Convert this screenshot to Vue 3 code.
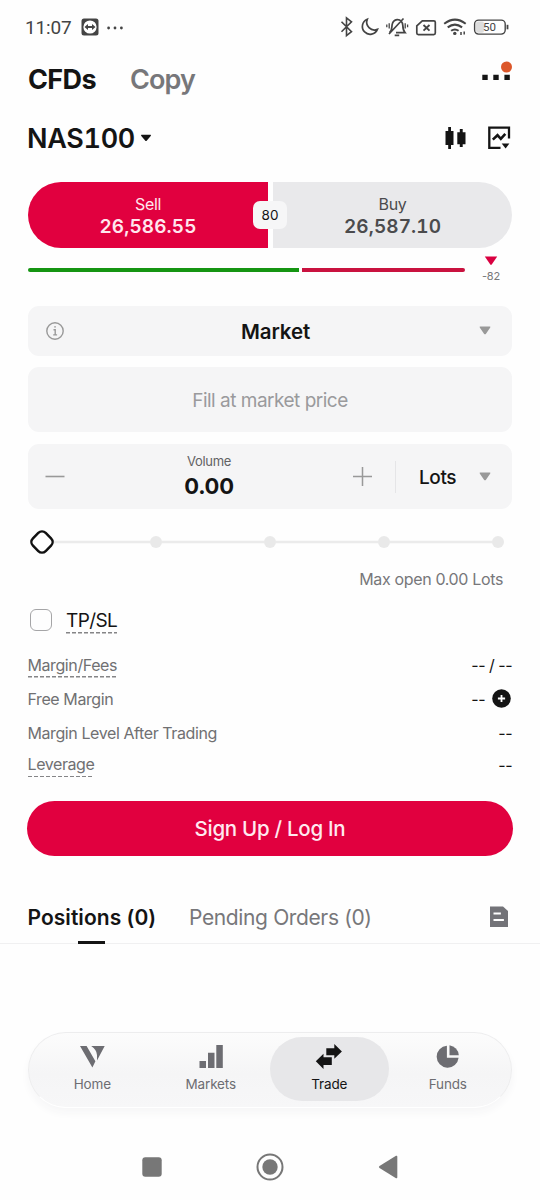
<script setup>
const stops = [0, 1, 2, 3, 4]
</script>

<template>
  <main class="screen">
    <header class="status">
      <span class="clock">11:07</span>
      <svg class="viewer" width="18" height="18" viewBox="0 0 18 18">
        <rect x=".5" y=".5" width="17" height="17" rx="2.5" fill="#444" />
        <circle cx="9" cy="9" r="6.600" fill="#fff" />
        <path d="M3.500 9 7 5.900v2.200h4V5.900L14.500 9 11 12.100V9.900H7v2.200z" fill="#444" />
      </svg>
      <svg class="more-notes" width="18" height="4" viewBox="0 0 18 4" fill="#444">
        <circle cx="2.600" cy="2" r="1.400" /><circle cx="9" cy="2" r="1.400" /><circle cx="15.400" cy="2" r="1.400" />
      </svg>
      <svg class="indicators" width="174" height="24" viewBox="338 16 174 24" fill="none" stroke="#444" stroke-width="1.700">
        <path d="m341.500 21.700 10 10-5 4V17.800l5 4-10 10" stroke-width="1.600" />
        <path d="M367.300 19.200a7.800 7.800 0 1 0 10.100 10.200c-6.500 2.500-12.500-3.800-10.100-10.200z" />
        <path d="M389.500 32.600c2.700-2 2.100-5.300 2.700-8.300.5-2.400 2.300-4.200 4.900-4.600 3.700-.2 5.600 2.700 5.700 5.700.1 3.200.4 5.200 2.200 7.200h-9M394.700 35.300h4.500M403.500 18.500l-14.500 15.500" />
        <path d="M389.200 23.200v5.200M386.800 24.500v2.700M405.200 23.200v5.200M407.600 24.500v2.700" stroke-width="1.300" />
        <path d="M422.300 20.800h11.500q1.500 0 1.500 1.500v10.800q0 1.500-1.500 1.500h-15.500q-1.500 0-1.500-1.500v-7.300z" />
        <path d="m423.500 25 6 5.600m0-5.600-6 5.600" stroke-width="1.900" />
        <path d="M444.200 23.700q10.800-8.200 21.500 0M447.700 27.400q7.200-5.600 14.400 0M451.100 30.800q3.800-2.800 7.500 0" stroke-width="2" />
        <circle cx="454.800" cy="33.400" r="1.700" fill="#444" stroke="none" />
        <path d="M461 35v-3M464.200 31.500v3" stroke-width="1.500" />
        <rect x="476" y="21.400" width="8" height="11.400" rx="2" fill="#ddd" stroke="none" />
        <rect x="474.600" y="20.100" width="30.600" height="14" rx="4" stroke-width="1.400" />
        <path d="M507.500 24.800v4.500" stroke-width="1.800" />
        <text x="483" y="31.300" class="charge">50</text>
      </svg>
    </header>

    <nav class="modes">
      <b class="cfds">CFDs</b><span class="copy">Copy</span>
      <svg class="menu" width="32" height="24" viewBox="0 0 32 24">
        <path d="M2.300 14.700h5.400v5.400H2.300zM13.300 14.700h5.400v5.400h-5.400zM24.400 14.700h5.400v5.400h-5.400z" fill="#141414" />
        <circle cx="26.500" cy="7" r="5.500" fill="#dc572a" />
      </svg>
    </nav>

    <section class="symbol">
      <span class="ticker">NAS100</span>
      <svg class="drop" width="12" height="8" viewBox="0 0 12 8"><path d="M1.700.8h8.600q1.300 0 .4 1.200l-4 4.700q-.7.700-1.400 0l-4-4.700Q.4.800 1.700.8z" fill="#141414" /></svg>
      <svg class="candles" width="24" height="24" viewBox="0 0 24 24" fill="#141414">
        <path d="M1.500 5h2.700V1h2.800v4h2.500v14H7v4H4.200v-4H1.500zM13.300 6.300h2.500V3h2.900v3.300h2.800v12h-2.800v2.800h-2.900v-2.800h-2.500z" />
      </svg>
      <svg class="chart" width="24" height="24" viewBox="0 0 24 24" fill="none" stroke="#141414" stroke-width="2.300">
        <path d="M22 12.500V1.700H2.300v20.200h11.200" /><path d="m5.800 13.600 4.700-4.400 3.300 3.600 4.500-5" stroke-width="2.600" /><path d="M14.700 17.500h7.700l-3.800 4.900z" fill="#141414" stroke="none" />
      </svg>
    </section>

    <section class="quotes">
      <div class="quote sell"><span>Sell</span><strong>26,586.55</strong></div>
      <div class="quote buy"><span>Buy</span><strong>26,587.10</strong></div>
      <span class="spread">80</span>
    </section>

    <section class="sentiment">
      <i class="green"></i><i class="red"></i>
      <div class="delta">
        <svg width="14" height="10" viewBox="0 0 14 10"><path d="M.8.500h12.400L7.700 8.500q-.7.900-1.400 0z" fill="#d90040" /></svg>
        <span>-82</span>
      </div>
    </section>

    <section class="field order">
      <svg class="info" width="20" height="20" viewBox="0 0 20 20" fill="none" stroke="#999" stroke-width="1.400"><circle cx="10" cy="10" r="8.200" /><path d="M8.500 8.700h1.700v5.100M8.200 13.900h3.900M9.200 5.900h1.700" /></svg>
      <b class="market">Market</b>
      <svg class="caret" width="12" height="9" viewBox="0 0 12 9"><path d="M1.300.500h9.400q1.300 0 .4 1.200L7 7.700q-1 1-2 0l-4.100-6Q0 .500 1.300.500z" fill="#999" /></svg>
    </section>

    <section class="field fill"><span>Fill at market price</span></section>

    <section class="field volume">
      <svg class="minus" width="20" height="20" viewBox="0 0 20 20"><path d="M.500 9.500h19" stroke="#999" stroke-width="1.600" /></svg>
      <div class="amount"><span>Volume</span><b>0.00</b></div>
      <svg class="plus" width="20" height="20" viewBox="0 0 20 20"><path d="M0 9.500h19M9.500 0v19" stroke="#999" stroke-width="1.500" /></svg>
      <i class="divider"></i>
      <span class="lots">Lots</span>
      <svg class="caret" width="12" height="9" viewBox="0 0 12 9"><path d="M1.300.500h9.400q1.300 0 .4 1.200L7 7.700q-1 1-2 0l-4.100-6Q0 .500 1.300.500z" fill="#999" /></svg>
    </section>

    <section class="slider">
      <svg width="485" height="28" viewBox="0 0 485 28">
        <path d="M14 14h457" stroke="#ebebeb" stroke-width="2.400" />
        <circle v-for="s in stops" :key="s" :cx="14 + s * 114" cy="14" r="6" fill="#e9e9e9" />
        <rect x="5" y="5" width="18" height="18" rx="5.200" transform="rotate(45 14 14)" fill="#fff" stroke="#111" stroke-width="2.500" />
      </svg>
    </section>
    <div class="max"><span>Max open 0.00 Lots</span></div>

    <div class="stoploss"><i class="check"></i><span class="tpsl">TP/SL</span></div>

    <section class="stats">
      <div class="stat"><span class="dashed fees">Margin/Fees</span><span class="value">-- / --</span></div>
      <div class="stat"><span class="free">Free Margin</span><span class="value">--</span>
        <svg class="add" width="20" height="20" viewBox="0 0 20 20"><circle cx="9.500" cy="9.500" r="9.300" fill="#141414" /><path d="M5.900 9.500h7.200M9.500 5.900v7.200" stroke="#fff" stroke-width="1.800" /></svg>
      </div>
      <div class="stat"><span class="level">Margin Level After Trading</span><span class="value">--</span></div>
      <div class="stat short"><span class="dashed lev">Leverage</span><span class="value">--</span></div>
    </section>

    <button class="login"><span>Sign Up / Log In</span></button>

    <nav class="tabs">
      <b class="positions">Positions (0)</b><span class="pending">Pending Orders (0)</span>
      <svg class="history" width="20" height="22" viewBox="0 0 20 22"><path d="M0 .500h13L18 5v16H0z" fill="#737378" /><path d="M3.500 7.500h7.400M3.500 14h10.400" stroke="#fff" stroke-width="2.200" /></svg>
    </nav>

    <nav class="dock">
      <div class="item">
        <svg width="28" height="26" viewBox="0 0 28 26" fill="#6d6d72"><path d="M2 2h6.600l8.800 15.200-3 6.200zM13.200 2h13.500L19 16.600V10.900q-.2-5-5.800-8.900z" /></svg>
        <span>Home</span>
      </div>
      <div class="item">
        <svg width="28" height="26" viewBox="0 0 28 26" fill="#6d6d72"><path d="M2.500 17h6.500v7H2.500zM11 8.700h6.500V24H11zM19.300 1h6.500v23h-6.500z" /></svg>
        <span>Markets</span>
      </div>
      <div class="item active">
        <svg width="28" height="26" viewBox="0 0 28 26" fill="#141414"><path d="M11.300 4.300h8V0l7.600 7.600-7.600 7.200v-3.600h-8z" /><path d="M16.800 13.300H8.500V9.700L.8 17.300l7.700 7.600v-4h8.300z" /></svg>
        <span>Trade</span>
      </div>
      <div class="item">
        <svg width="28" height="26" viewBox="0 0 28 26" fill="#6d6d72"><path d="M12.900 1.700a11 11 0 1 0 11.700 12.100H12.900z" /><path d="M15.500 1.200a11 11 0 0 1 9.300 10H15.500z" /></svg>
        <span>Funds</span>
      </div>
    </nav>

    <footer class="system">
      <svg width="20" height="20" viewBox="0 0 20 20"><rect x=".3" y=".3" width="19.400" height="19.400" rx="3" fill="#777" /></svg>
      <svg width="28" height="28" viewBox="0 0 28 28"><circle cx="14" cy="14" r="12.500" fill="none" stroke="#777" stroke-width="2" /><circle cx="14" cy="14" r="7.700" fill="#777" /></svg>
      <svg width="20" height="24" viewBox="0 0 20 24"><path d="M18 .800q1.300-.6 1.300 1v20.400q0 1.600-1.300 1L1.500 13q-1.300-1 0-2z" fill="#777" /></svg>
    </footer>
  </main>
</template>

<style>
body { margin: 0; background: #fefefe; }
</style>

<style scoped>
* { box-sizing: border-box; }
.screen { width: 540px; height: 1200px; background: #fefefe; font-family: Inter, "Liberation Sans", sans-serif; color: #141414; display: flex; flex-direction: column; overflow: hidden; }
svg { display: block; flex: none; }
span, b, strong { white-space: nowrap; }
.status { height: 56px; display: flex; align-items: center; padding: 0 28px 0 25px; }
.clock { font: 19px/24px Roboto, sans-serif; color: #444; width: 56px; letter-spacing: -.15px; }
.viewer { margin-top: -2px; }
.more-notes { margin: -1px 0 0 7px; }
.indicators { margin-left: auto; }
.charge { font: 11.500px Roboto, sans-serif; fill: #444; stroke: none; }
.modes { height: 46px; display: flex; align-items: center; padding: 0 28px; }
.cfds { font-size: 27px; font-weight: 700; width: 102px; letter-spacing: -.6px; }
.copy { font-size: 27px; font-weight: 600; color: #77777a; letter-spacing: -.9px; }
.menu { margin: -15px 0 0 auto; }
.symbol { height: 72px; display: flex; align-items: center; padding: 0 29px 0 27px; }
.ticker { font-size: 27px; font-weight: 600; width: 113px; margin-top: 1px; font-feature-settings: "tnum"; letter-spacing: -.3px; }
.drop { margin-top: -1px; }
.candles { margin-left: auto; }
.chart { margin-left: 19px; margin-top: -1px; }
.quotes { height: 66px; margin: 8px 28px 0; display: flex; gap: 5px; position: relative; }
.quote { display: flex; flex-direction: column; align-items: center; padding-top: 11px; }
.quote span { font-size: 16px; line-height: 22px; letter-spacing: -.35px; }
.quote strong { font-size: 19px; line-height: 23px; font-weight: 600; font-feature-settings: "tnum"; letter-spacing: .1px; }
.sell { width: 240px; background: #e1003f; color: #ffe6ee; border-radius: 33px 0 0 33px; }
.buy { flex: 1; background: #e9e9eb; color: #4b4b4d; border-radius: 0 33px 33px 0; }
.spread { position: absolute; left: 225px; top: 19px; width: 34px; height: 28px; border-radius: 7px; background: #f6f6f7; text-align: center; font-size: 13.500px; line-height: 28px; }
.sentiment { height: 38px; margin: 7px 28px 0; display: flex; align-items: flex-start; }
.green, .red { height: 4px; margin-top: 13px; border-radius: 2px 0 0 2px; background: #159512; width: 271px; }
.red { width: 163px; margin-left: 3px; border-radius: 0 2px 2px 0; background: #c9123f; }
.delta { margin: 1px 0 0 auto; width: 42px; display: flex; flex-direction: column; align-items: center; font-size: 11px; line-height: 12px; color: #77777a; gap: 4px; letter-spacing: -.2px; }
.field { margin: 0 28px; background: #f5f5f6; border-radius: 11px; display: flex; align-items: center; }
.order { height: 50px; margin-top: 13px; padding: 0 21px 0 17px; }
.order .caret { margin-top: -1px; }
.market { flex: 1; text-align: center; font-size: 20.500px; font-weight: 600; padding-left: 7px; letter-spacing: -.1px; }
.fill { height: 65px; margin-top: 11px; padding-top: 2px; justify-content: center; font-size: 19px; color: #9a9a9c; letter-spacing: -.5px; }
.volume { height: 65px; margin-top: 12px; padding: 0 21px 0 17px; }
.amount { width: 288px; display: flex; flex-direction: column; align-items: center; margin-top: -1px; }
.amount span { font-size: 13px; line-height: 20px; color: #626264; letter-spacing: -.3px; }
.amount b { font-size: 22px; line-height: 31px; font-weight: 700; letter-spacing: -.3px; }
.divider { width: 1px; height: 32px; background: #e5e5e7; margin-left: 22px; }
.lots { font-size: 19px; font-weight: 500; margin-left: 23px; margin-top: 2px; letter-spacing: -.4px; }
.volume .caret { margin-left: auto; }
.slider { height: 28px; margin: 19px 28px 0; }
.max { height: 26px; margin-top: 10px; padding-right: 37px; text-align: right; font-size: 16px; line-height: 26px; color: #77777a; letter-spacing: -.35px; }
.stoploss { height: 28px; margin-top: 14px; padding-left: 30px; display: flex; align-items: center; }
.check { width: 22px; height: 22px; border: 1.500px solid #a5a5a7; border-radius: 6px; }
.tpsl { font-size: 19px; line-height: 28px; height: 27px; margin-left: 14px; letter-spacing: -.6px; }
.tpsl, .dashed { background: repeating-linear-gradient(90deg, #858587 0 4px, transparent 4px 6px) 0 100% / 100% 1.500px no-repeat; }
.stats { height: 135px; margin: 14px 28px 0 27.500px; font-size: 16px; color: #707072; letter-spacing: -.41px; }
.stat { height: 34px; display: flex; align-items: center; }
.short { height: 29px; }
.dashed { line-height: 25px; height: 25px; }
.value { margin-left: auto; color: #141414; letter-spacing: -.5px; }
.add { margin-left: 7px; }
.login { height: 55px; margin: 18px 27px 0; border: 0; border-radius: 28px; background: #e1003f; color: #ffe9f0; font: 500 20.500px Inter, sans-serif; letter-spacing: -.28px; }
.tabs { height: 54px; margin-top: 34px; padding: 2px 30px 0 27.500px; display: flex; align-items: center; border-bottom: 1px solid #f0f0f1; position: relative; font-size: 21px; }
.tabs::after { content: ""; position: absolute; left: 78px; bottom: -1px; width: 27px; height: 3px; background: #141414; }
.positions { font-weight: 600; width: 161.500px; letter-spacing: .05px; }
.pending { color: #77777a; letter-spacing: -.37px; }
.history { margin: -1px 0 0 auto; }
.dock { height: 76px; margin: 88px 28px 0; padding: 4px; display: flex; border: 1px solid #ededee; border-bottom-color: #fff; border-radius: 38px; background: linear-gradient(#fcfcfc, #f5f5f6 55%, #f7f7f8); box-shadow: 0 5px 8px #f6f6f7; }
.item { flex: 1; height: 64px; border-radius: 32px; display: flex; flex-direction: column; align-items: center; padding-top: 7px; font-size: 13.500px; line-height: 20px; color: #6d6d72; gap: 4px; letter-spacing: -.15px; }
.active { background: #e7e7e9; color: #141414; }
.system { flex: 1; display: flex; align-items: center; justify-content: center; gap: 94px; padding: 26px 1px 0 0; }
</style>
